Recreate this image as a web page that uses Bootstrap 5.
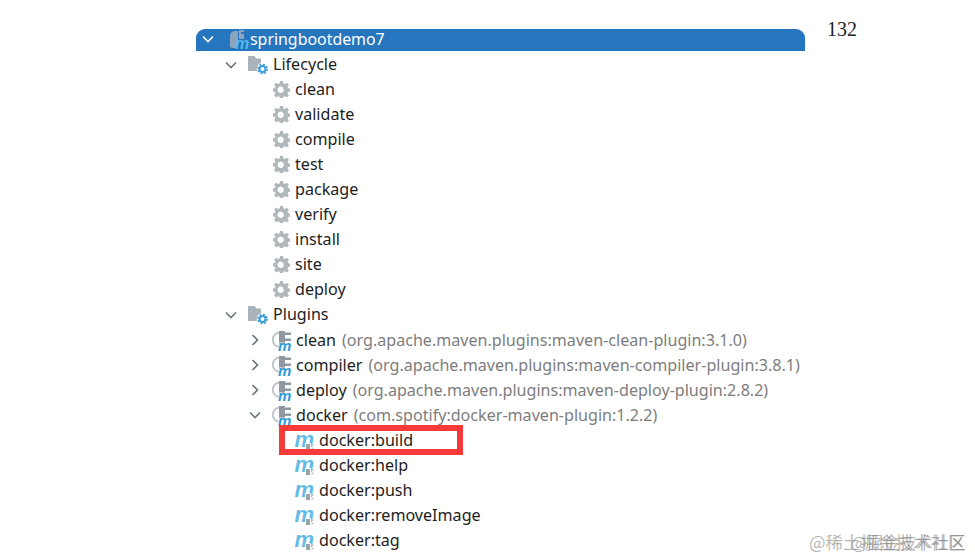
<!DOCTYPE html>
<html lang="en">
<head>
    <meta charset="UTF-8" />
    <title>springbootdemo7</title>
    <link href="https://cdn.jsdelivr.net/npm/bootstrap@5.3.6/dist/css/bootstrap.min.css" rel="stylesheet" crossorigin="anonymous" />
    <style>
        html, body { height: 558px; overflow: hidden; background: #fff; }
        body { font-family: "Noto Sans", "Open Sans", sans-serif; font-size: 16.1px; color: #1d1d1d; }
        .tree-wrap { padding: 27px 0 0 196px; }
        .tree-col { width: 609px; }
        .tree-row { height: 25.05px; line-height: 25px; white-space: nowrap; }
        .tree-root { background: #2675bf; color: #fff; border-radius: 9px 9px 0 0; height: 22px; margin-top: 2px; margin-bottom: 1px; font-size: 15.9px; padding-bottom: 2px; }
        .lvl0 { padding-left: 5px; }
        .lvl1 { padding-left: 28px; }
        .lvl2 { padding-left: 76px; }
        .lvl2b { padding-left: 52px; }
        .lvl3 { padding-left: 99px; }
        .arrow { width: 14px; height: 14px; flex: none; }
        .arrow-gap { margin-right: 10px; }
        .ico { width: 21px; height: 21px; flex: none; margin-right: 2px; }
        .ico-root { margin-left: 3px; margin-right: 1px; }
        .ico-sec { margin-right: 4px; }
        .ico-plug { margin-right: 3px; }
        .ico-gear { width: 17px; height: 17px; margin-left: 1px; margin-right: 5px; }
        .ico-goal { margin-right: 3px; }
        .extra { color: #7d7d7d; margin-left: 6px; }
        .page-num { font-family: "Liberation Serif", serif; font-size: 20px; color: #222; margin-left: 22px; line-height: 20px; margin-top: -8px; }
        .red-box { position: absolute; left: 83px; top: -3px; width: 184px; height: 30px; border: 6px solid #f63a3a; }
        .wm { position: absolute; top: 532px; font-family: "Noto Sans CJK SC", sans-serif; line-height: 20px; color: rgba(120,120,120,.55); white-space: nowrap; }
        .wm-a { left: 809px; font-size: 17.5px; }
        .wm-b { left: 851px; font-size: 16.5px; }
    </style>
</head>
<body>
<svg width="0" height="0" class="position-absolute">
    <defs>
        <symbol id="down" viewBox="0 0 14 14"><path d="M2 4.5 7 9.5 12 4.5" fill="none" stroke="currentColor" stroke-width="1.6"/></symbol>
        <symbol id="right" viewBox="0 0 14 14"><path d="M4.5 2 9.5 7 4.5 12" fill="none" stroke="currentColor" stroke-width="1.6"/></symbol>
        <symbol id="gear" viewBox="0 0 16 16">
            <path fill="#b0b8bc" fill-rule="evenodd" d="M6.600 0h2.800l.4 2.300 1.300.6L13 1.600l2 2-1.300 1.900.6 1.300 2.300.4v2.800l-2.300.4-.6 1.300 1.300 1.900-2 2-1.900-1.300-1.300.6-.4 2.300H6.600l-.4-2.300-1.300-.6L3 15.300l-2-2 1.300-1.900-.6-1.300L-.6 9.700V6.900l2.300-.4.6-1.300L1 3.600l2-2 1.900 1.300 1.300-.6zM8 5.400a3 3 0 1 0 0 5.800 3 3 0 0 0 0-5.800z"/>
        </symbol>
        <symbol id="folder" viewBox="0 0 21 21">
            <path fill="#a9b3b9" d="M0 2h6.500l2 2.500H13V9a6.500 6.500 0 0 0-4 8H0z"/>
            <circle cx="14.500" cy="15" r="3" fill="none" stroke="#3d9ed8" stroke-width="2"/>
            <circle cx="14.500" cy="15" r="4.600" fill="none" stroke="#3d9ed8" stroke-width="1.600" stroke-dasharray="1.900 1.700"/>
        </symbol>
        <symbol id="module" viewBox="0 0 21 21">
            <path fill="#8da5bc" d="M7 2h3v12h-1v5H4a2 2 0 0 1-2-2V7a5 5 0 0 1 5-5z"/>
            <path fill="#8da5bc" d="M11 1h5v9h-5z"/>
            <path fill="#2675bf" d="M13 3h3v2h-3z"/>
            <text x="7" y="20" font-family="Liberation Sans, sans-serif" font-style="italic" font-weight="700" font-size="16" fill="#53b8ec">m</text>
        </symbol>
        <symbol id="plugin" viewBox="0 0 21 21">
            <path fill="none" stroke="#c0c6ca" stroke-width="2" d="M8 2.500a7.200 7.200 0 0 0 0 14.500"/>
            <path fill="#8f999f" d="M7 1h6v13H7zM13 2.500h6v2.500h-6zM13 8.500h6v2.500h-6z"/>
            <text x="6" y="20.500" font-family="Liberation Sans, sans-serif" font-style="italic" font-weight="700" font-size="15" stroke="#fff" stroke-width=".8" paint-order="stroke" fill="#2f9ad8">m</text>
        </symbol>
        <symbol id="goal" viewBox="0 0 21 21">
            <text x="-.5" y="16.500" font-family="Liberation Sans, sans-serif" font-style="italic" font-weight="700" font-size="22" fill="#62bce6">m</text>
            <path fill="#9aa3a9" stroke="#fff" d="M10.500 13.500h5v7h-5z"/>
            <path fill="#c3c9cc" d="M16.500 14h2v2h-2zM16.500 17.500h2v2h-2z"/>
        </symbol>
    </defs>
</svg>

<div class="tree-wrap d-flex align-items-start">
    <div class="tree-col">
        <div class="tree-row tree-root lvl0 d-flex align-items-center">
            <svg class="arrow arrow-gap"><use href="#down"/></svg>
            <svg class="ico ico-root"><use href="#module"/></svg>
            <span>springbootdemo7</span>
        </div>
        <div id="tree"></div>
    </div>
    <div class="page-num">132</div>
</div>

<div class="wm wm-a">@稀土掘金技术社区</div>
<div class="wm wm-b">@掘金技术社区</div>

<script>
    // filas del arbol: [tipo, texto, detalle]
    const filas = [
        ['sec', 'Lifecycle'],
        ['fase', 'clean'], ['fase', 'validate'], ['fase', 'compile'], ['fase', 'test'], ['fase', 'package'],
        ['fase', 'verify'], ['fase', 'install'], ['fase', 'site'], ['fase', 'deploy'],
        ['sec', 'Plugins'],
        ['plug', 'clean', '(org.apache.maven.plugins:maven-clean-plugin:3.1.0)', 'right'],
        ['plug', 'compiler', '(org.apache.maven.plugins:maven-compiler-plugin:3.8.1)', 'right'],
        ['plug', 'deploy', '(org.apache.maven.plugins:maven-deploy-plugin:2.8.2)', 'right'],
        ['plug', 'docker', '(com.spotify:docker-maven-plugin:1.2.2)', 'down'],
        ['goal', 'docker:build'], ['goal', 'docker:help'], ['goal', 'docker:push'],
        ['goal', 'docker:removeImage'], ['goal', 'docker:tag']
    ];

    const uso = (id, cls) => `<svg class="${cls}"><use href="#${id}"/></svg>`;
    const flecha = id => `<svg class="arrow arrow-gap text-secondary"><use href="#${id}"/></svg>`;

    document.getElementById('tree').innerHTML = filas.map(([tipo, texto, extra, dir]) => {
        if (tipo === 'sec') return `<div class="tree-row lvl1 d-flex align-items-center">${flecha('down')}${uso('folder', 'ico ico-sec')}<span>${texto}</span></div>`;
        if (tipo === 'fase') return `<div class="tree-row lvl2 d-flex align-items-center">${uso('gear', 'ico ico-gear')}<span>${texto}</span></div>`;
        if (tipo === 'plug') return `<div class="tree-row lvl2b d-flex align-items-center">${flecha(dir)}${uso('plugin', 'ico ico-plug')}<span>${texto}</span><span class="extra">${extra}</span></div>`;
        const caja = texto === 'docker:build' ? '<div class="red-box"></div>' : '';
        return `<div class="tree-row lvl3 d-flex align-items-center position-relative">${uso('goal', 'ico ico-goal')}<span>${texto}</span>${caja}</div>`;
    }).join('');
</script>

<script src="https://cdn.jsdelivr.net/npm/bootstrap@5.3.6/dist/js/bootstrap.bundle.min.js" crossorigin="anonymous"></script>
</body>
</html>
